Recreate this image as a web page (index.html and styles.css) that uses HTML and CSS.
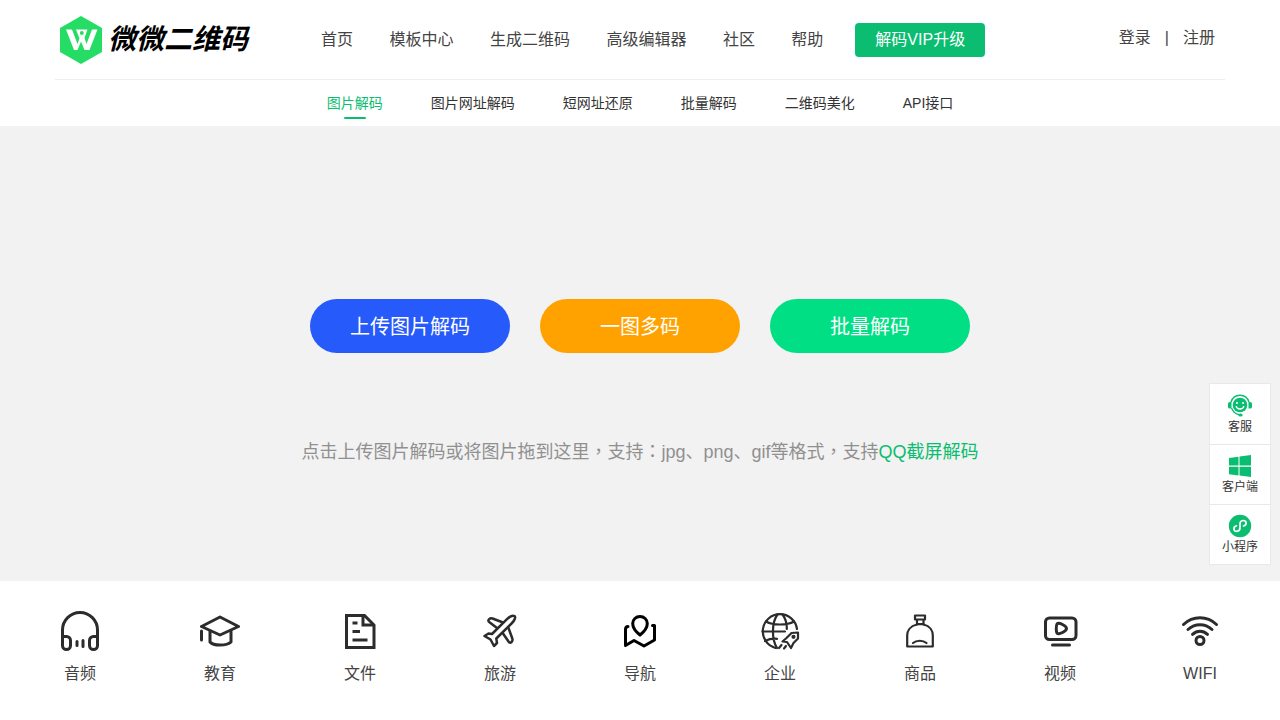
FILE: index.html
```html
<!DOCTYPE html>
<html lang="zh-CN">
<head>
<meta charset="utf-8">
<meta name="viewport" content="width=device-width, initial-scale=1">
<title>微微二维码</title>
<link rel="stylesheet" href="styles.css">
</head>
<body>
<header class="header">
  <div class="topbar">
    <a class="logo" href="#">
      <svg class="logo-mark" viewBox="0 0 44 50" aria-hidden="true">
        <path d="M22 1 43 13v24L22 49 1 37V13Z" fill="#25dc64"/>
        <path d="M7 14.500h6L18.500 29l2-5.500-3.500-9h11.500l-3 8.500 2 6L33 14.500h5.500L30.500 35h-5L22 26.500 18.500 35H15Z" fill="#fff"/>
        <circle cx="22.800" cy="18" r="2" fill="#25dc64"/>
      </svg>
      <span class="logo-text">微微二维码</span>
    </a>
    <nav class="nav">
      <div class="nav-links">
        <a href="#">首页</a>
        <a href="#">模板中心</a>
        <a href="#">生成二维码</a>
        <a href="#">高级编辑器</a>
        <a href="#">社区</a>
        <a href="#">帮助</a>
      </div>
      <a class="vip" href="#">解码VIP升级</a>
    </nav>
    <div class="account"><a href="#">登录</a><span>|</span><a href="#">注册</a></div>
  </div>
  <nav class="subnav">
    <a class="active" href="#">图片解码</a>
    <a href="#">图片网址解码</a>
    <a href="#">短网址还原</a>
    <a href="#">批量解码</a>
    <a href="#">二维码美化</a>
    <a href="#">API接口</a>
  </nav>
</header>

<main class="decode">
  <div class="actions">
    <button class="action blue" type="button">上传图片解码</button>
    <button class="action orange" type="button">一图多码</button>
    <button class="action green" type="button">批量解码</button>
  </div>
  <p class="hint">点击上传图片解码或将图片拖到这里<span lang="zh-TW">，</span>支持<span lang="zh-TW">：</span>jpg、png、gif等格式<span lang="zh-TW">，</span>支持<a href="#">QQ截屏解码</a></p>
</main>

<section class="types">
  <a class="type" href="#">
    <svg viewBox="0 0 40 40" aria-hidden="true"><g class="line thick"><path d="M2.500 34V19a17.500 17.500 0 0 1 35 0v15"/><path d="M2.500 25.500h4a4 4 0 0 1 4 4v5a4 4 0 0 1-8 0ZM37.500 25.500h-4a4 4 0 0 0-4 4v5a4 4 0 0 0 8 0Z"/><path d="M17 30.500v4M23 29.500v6"/></g></svg>
    <span>音频</span>
  </a>
  <a class="type" href="#">
    <svg viewBox="0 0 40 40" aria-hidden="true"><g class="line thick"><path d="M20 6 1.500 15.500 20 24l18.500-8.500Z"/><path d="M10 20.500V31c3 4 17 4 21 0V20.500M1.500 20v9"/></g></svg>
    <span>教育</span>
  </a>
  <a class="type" href="#">
    <svg viewBox="0 0 40 40" aria-hidden="true"><g class="line thick square"><path d="M6.500 4.500h18L34 14v22.500H6.500Z"/><path d="M23 4.500V14h11"/><path d="M12.500 12h5M12.500 20.500h7.500M12.500 29h15"/></g></svg>
    <span>文件</span>
  </a>
  <a class="type" href="#">
    <svg viewBox="0 0 40 40" aria-hidden="true"><g class="line medium"><path d="M34.500 5c-2-1-4.500.3-7 2.700L12 23l-3.500-.5L4.500 25l6 3.500L14 35l3-3-.7-4.500L32 12c2.500-2.500 4-6 2.500-7Z"/><path d="m23 11.500-10.500-4c-1.500-.5-2.500-.2-3.500.8s-.8 2.200.5 3L17 17M28.500 17l3.800 10.500c.5 1.500.2 2.500-.8 3.500s-2.200.8-3-.5L23 22.500"/></g></svg>
    <span>旅游</span>
  </a>
  <a class="type" href="#">
    <svg viewBox="0 0 40 40" aria-hidden="true"><g class="line thick black"><path d="M20 5.500c-4 0-7.300 3-7.300 7 0 4.500 4.500 9.300 7.300 11.500 2.800-2.200 7.300-7 7.300-11.500 0-4-3.300-7-7.300-7Z"/><path d="M8 15.500c-2.500 0-2.500 1.500-2.500 3v16L14 29.500l10 5.500 10.500-6V14.500h-2"/></g></svg>
    <span>导航</span>
  </a>
  <a class="type" href="#">
    <svg viewBox="0 0 40 40" aria-hidden="true"><g class="line thin"><path d="M37 18A17.200 17.200 0 1 0 15.500 37"/><path d="M17.500 3.500c-6 8-6 25-.5 33.500M22.500 3.500c3 4 4.500 9 4.300 14.500M6 10.500c7 4 21 4 28 0M2.500 20.500H25M5 30c4-2 8-2.500 12-2.200"/><path d="m38 21.500-6.500.5-5 5-4 3.500 4.500.5 4 6 2.500-5L38 27.500Z"/><circle cx="33.500" cy="25.800" r="1"/><path d="m21.500 34-2.500 3M26 35l-2 2.500"/></g></svg>
    <span>企业</span>
  </a>
  <a class="type" href="#">
    <svg viewBox="0 0 40 40" aria-hidden="true"><g class="line thin"><path d="M15 4.500h10V8.500H15ZM17 8.500v5M23.500 8.500v5M17 13.200h6.500"/><path d="M17 13.500c-7 1.500-9.800 6.500-9.800 11V35.500h25.600V24.500c0-4.500-2.600-9.500-9.300-11"/><path d="M13 32c3.500-3 10-3 13.500 0"/></g></svg>
    <span>商品</span>
  </a>
  <a class="type" href="#">
    <svg viewBox="0 0 40 40" aria-hidden="true"><g class="line thick"><rect x="5.500" y="7" width="30.500" height="21.500" rx="4"/><path d="M12.500 34h17"/><path d="M17 13c1-1.300 3-.8 5.500.5s4 2.500 4 4-1.500 2.700-4 4-4.500 1.800-5.500.5-1-7.500 0-9Z"/></g></svg>
    <span>视频</span>
  </a>
  <a class="type" href="#">
    <svg viewBox="0 0 40 40" aria-hidden="true"><g class="line thick"><path d="M3.500 13.500c9.500-9 23.500-9 33 0M8 18.500c7-6.500 17-6.500 24 0M12.500 23.300c4.500-4 10.500-4 15 0"/><circle cx="20" cy="29.500" r="4"/></g></svg>
    <span>WIFI</span>
  </a>
</section>

<aside class="side">
  <a href="#">
    <svg viewBox="0 0 24 24" aria-hidden="true"><circle cx="12" cy="11" r="7.300" fill="#0bbd70"/><path d="M3 8C6-1 18-1 21 8" fill="none" stroke="#0bbd70" stroke-width="1.500"/><path d="M0 9.500Q0 8 2 8h1.500v6.500H2q-2 0-2-1.500ZM24 9.500Q24 8 22 8h-1.500v6.500H22q2 0 2-1.500Z" fill="#0bbd70"/><path d="M3.500 14c1.500 4 4 6.300 8.500 6.800" fill="none" stroke="#0bbd70" stroke-width="1.300"/><ellipse cx="12.500" cy="21" rx="2.200" ry="1.500" fill="#0bbd70"/><path d="M8 12c1 4 7 4 8 0" fill="none" stroke="#fff" stroke-width="1.300"/><circle cx="9" cy="9" r="1" fill="#fff"/><circle cx="15" cy="9" r="1" fill="#fff"/></svg>
    <span>客服</span>
  </a>
  <a href="#">
    <svg viewBox="0 0 24 24" aria-hidden="true"><path d="m1 4 9.500-1.300v8.800H1ZM11.500 2.500 23 1v10.500H11.500ZM1 12.700h9.500v8.800L1 20.300ZM11.500 12.700H23V23l-11.500-1.400Z" fill="#0bbd70"/></svg>
    <span>客户端</span>
  </a>
  <a href="#">
    <svg viewBox="0 0 24 24" aria-hidden="true"><circle cx="12" cy="12" r="11.200" fill="#0bbd70"/><path d="M8.500 11.800c-4 1.300-3 5.500.3 5.500 2 0 3.200-1.400 3.200-3.200V9.500c0-1.800 1.500-3 3.200-3 3.500 0 4.200 4.200.3 5.500" fill="none" stroke="#fff" stroke-width="1.700" stroke-linecap="round"/></svg>
    <span>小程序</span>
  </a>
</aside>
</body>
</html>
```
FILE: styles.css
```css
* {
  box-sizing: border-box;
}

body {
  margin: 0;
  background: #fff;
  color: #444;
  font: 16px/24px "Liberation Sans", "Noto Sans CJK SC", sans-serif;
}

a {
  color: inherit;
  text-decoration: none;
}

.topbar {
  display: flex;
  align-items: center;
  height: 80px;
  margin: 0 55px;
  border-bottom: 1px solid #eee;
}

.logo {
  display: flex;
  align-items: center;
  gap: 5px;
  width: 250px;
  padding-left: 4px;
}

.logo-mark {
  width: 44px;
  height: 50px;
}

.logo-text {
  color: #000;
  font-size: 28px;
  font-style: italic;
  font-weight: 700;
  line-height: 40px;
}

.nav {
  display: flex;
  align-items: center;
  white-space: nowrap;
}

.nav-links a {
  display: inline-block;
  padding: 0 16px;
}

.vip {
  margin-left: 16px;
  padding: 5px 20px;
  border-radius: 4px;
  background: #0bbd70;
  color: #fff;
}

.account {
  display: flex;
  gap: 14px;
  margin-left: auto;
  padding: 0 10px 4px 0;
  white-space: nowrap;
}

.subnav {
  display: flex;
  justify-content: center;
  gap: 48px;
  height: 46px;
  color: #333;
  font-size: 14px;
  line-height: 46px;
}

.subnav .active {
  position: relative;
  color: #0bbd70;
}

.subnav .active::after {
  content: "";
  position: absolute;
  top: 37px;
  left: 50%;
  width: 22px;
  height: 2px;
  margin-left: -11px;
  border-radius: 1px;
  background: #0bbd70;
}

.decode {
  padding: 173px 20px 116px;
  background: #f2f2f2;
  text-align: center;
}

.actions {
  display: flex;
  justify-content: center;
  gap: 30px;
}

.action {
  width: 200px;
  height: 54px;
  padding: 2px 0 0;
  border: 0;
  border-radius: 27px;
  color: #fff;
  font: inherit;
  font-size: 20px;
  cursor: pointer;
}

.blue {
  background: #275afa;
}

.orange {
  background: #ffa200;
}

.green {
  background: #00df83;
}

.hint {
  margin: 86px 0 0;
  color: #909090;
  font-size: 18px;
  line-height: 26px;
}

.hint a {
  color: #0bbd70;
}

.types {
  display: grid;
  grid-template-columns: repeat(9, 1fr);
  padding: 30px 10px 34px;
}

.type {
  display: flex;
  flex-direction: column;
  align-items: center;
  gap: 11px;
}

.type svg {
  width: 40px;
  height: 40px;
}

.line {
  fill: none;
  stroke: #2c2c2c;
  stroke-linecap: round;
  stroke-linejoin: round;
}

.thick {
  stroke-width: 3;
}

.medium {
  stroke-width: 2.5;
}

.thin {
  stroke-width: 2.2;
}

.square {
  stroke-linecap: butt;
  stroke-linejoin: miter;
}

.black {
  stroke: #000;
}

.side {
  position: fixed;
  right: 9px;
  bottom: 155px;
  width: 62px;
  border: 1px solid #e8e8e8;
  background: #fff;
  color: #333;
  font-size: 12px;
  line-height: 18px;
}

.side a {
  display: flex;
  flex-direction: column;
  align-items: center;
  height: 60px;
  padding-top: 10px;
}

.side a + a {
  padding-top: 9px;
  border-top: 1px solid #e8e8e8;
}

.side svg {
  width: 24px;
  height: 24px;
}
```
